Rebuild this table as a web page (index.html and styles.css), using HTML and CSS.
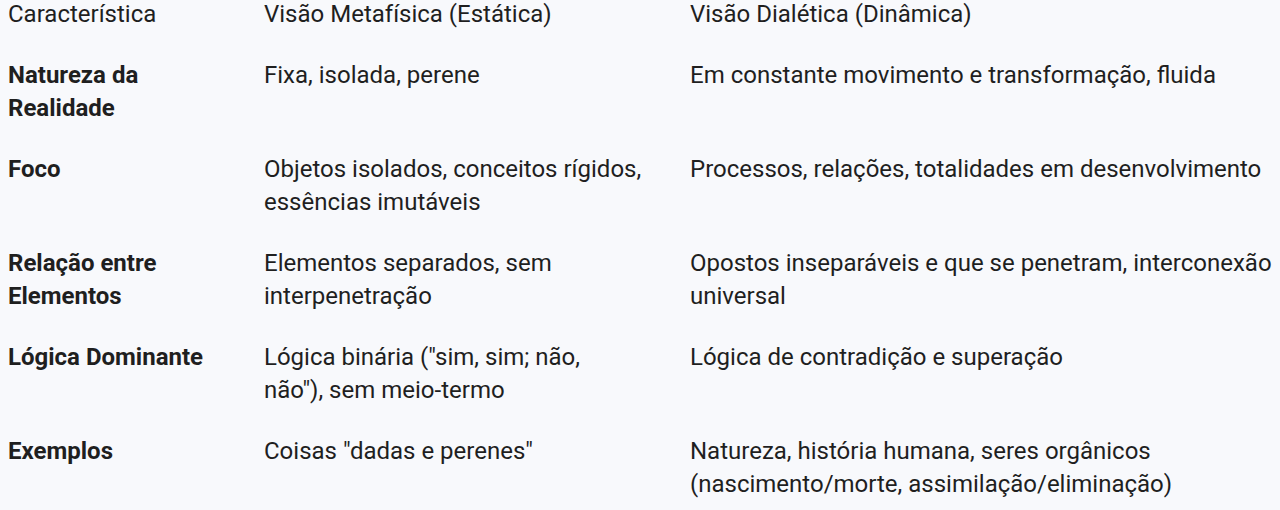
FILE: index.html
```html
<!DOCTYPE html>
<html lang="pt">
<head>
<meta charset="utf-8">
<link rel="stylesheet" href="styles.css">
</head>
<body>
<div class="table">
  <div class="row head">
    <div class="cell c1">Característica</div>
    <div class="cell c2">Visão Metafísica (Estática)</div>
    <div class="cell c3">Visão Dialética (Dinâmica)</div>
  </div>
  <div class="row">
    <div class="cell c1 key">Natureza da Realidade</div>
    <div class="cell c2">Fixa, isolada, perene</div>
    <div class="cell c3">Em constante movimento e transformação, fluida</div>
  </div>
  <div class="row">
    <div class="cell c1 key">Foco</div>
    <div class="cell c2">Objetos isolados, conceitos rígidos, essências imutáveis</div>
    <div class="cell c3">Processos, relações, totalidades em desenvolvimento</div>
  </div>
  <div class="row">
    <div class="cell c1 key">Relação entre Elementos</div>
    <div class="cell c2">Elementos separados, sem interpenetração</div>
    <div class="cell c3">Opostos inseparáveis e que se penetram, interconexão universal</div>
  </div>
  <div class="row">
    <div class="cell c1 key">Lógica Dominante</div>
    <div class="cell c2">Lógica binária ("sim, sim; não, não"), sem meio-termo</div>
    <div class="cell c3">Lógica de contradição e superação</div>
  </div>
  <div class="row">
    <div class="cell c1 key">Exemplos</div>
    <div class="cell c2">Coisas "dadas e perenes"</div>
    <div class="cell c3">Natureza, história humana, seres orgânicos (nascimento/morte, assimilação/eliminação)</div>
  </div>
</div>
</body>
</html>
```
FILE: styles.css
```css
html, body {
  margin: 0;
  padding: 0;
  background: #f8f9fc;
}
body {
  font-family: Roboto, "Noto Sans", sans-serif;
  font-size: 24px;
  line-height: 33px;
  color: #1f1f1f;
  overflow: hidden;
}
.table {
  margin-top: -15px;
  padding-left: 8px;
}
.row {
  display: grid;
  grid-template-columns: 256px 426px 596px;
}
.cell {
  padding: 13px 30px 15px 0;
}
.c2 {
  padding-right: 48px;
}
.key {
  font-weight: 700;
}
.c3 {
  padding-right: 0;
}
```
